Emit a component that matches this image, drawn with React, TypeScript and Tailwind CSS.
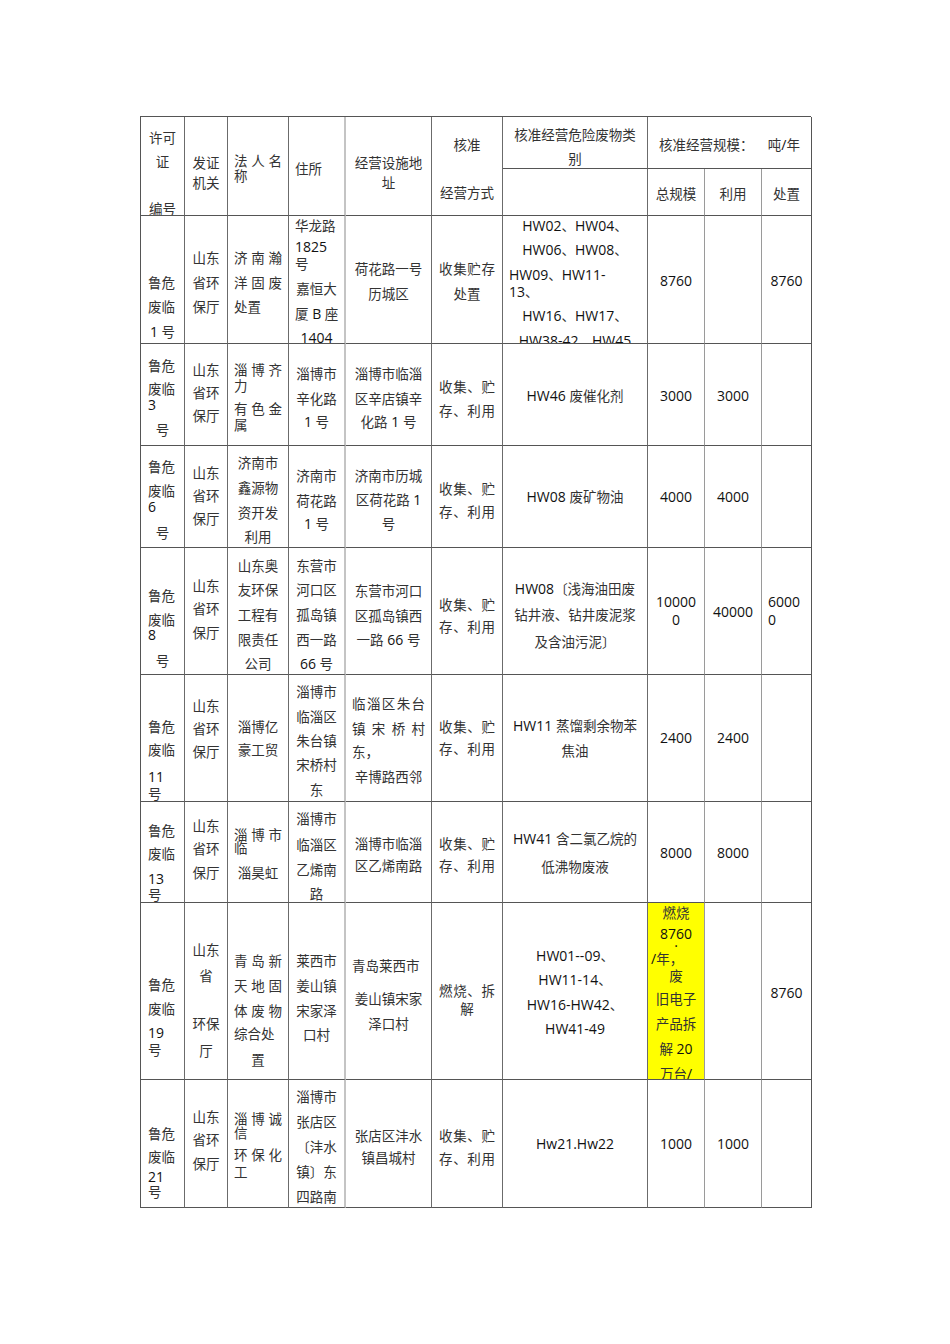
import React from "react";

type Align = "c" | "l" | "j";
type Line = [string, number, Align];
type Cell = {
  col: number;
  top: number;
  lines: Line[];
  span?: "r2" | "c3";
  yellow?: boolean;
};

const LH = 17;
const CJK = /([\u2E80-\u9FFF\u3000-\u303F\uFF00-\uFFEF]+)/;

function Runs({ text }: { text: string }) {
  const parts = text.split(CJK).filter((p) => p.length > 0);
  return (
    <>
      {parts.map((p, i) =>
        CJK.test(p) ? (
          <span key={i} className="text-[13.5px] text-[#333333]">
            {p}
          </span>
        ) : (
          <span key={i} className="text-[14px] text-[#111111]">
            {p}
          </span>
        )
      )}
    </>
  );
}

const PAD: Record<number, string> = {
  1: "px-[7px]",
  2: "px-[5px]",
  3: "px-[6px]",
  4: "px-[6px]",
  5: "px-[6px]",
  6: "px-[7px]",
  7: "px-[6px]",
  8: "px-[3px]",
  9: "px-[3px]",
  10: "px-[6px]",
};

const BORDER: Record<number, string> = {
  1: "border-r border-r-[#6b6b6b]",
  2: "border-r border-r-[#6b6b6b]",
  3: "border-r border-r-[#6b6b6b]",
  4: "border-r-2 border-r-[#c4c4c4]",
  5: "border-r border-r-[#6b6b6b]",
  6: "border-r border-r-[#6b6b6b]",
  7: "border-r border-r-[#6b6b6b]",
  8: "border-r border-r-[#9a9a9a]",
  9: "border-r border-r-[#9a9a9a]",
  10: "border-r border-r-[#555555]",
};

function LineView({ line, mt }: { line: Line; mt: number }) {
  const [text, , align] = line;
  if (align === "j") {
    const segs = text.includes("|")
      ? text.split("|")
      : Array.from(text.replace(/\s/g, ""));
    return (
      <div
        className="flex h-[17px] shrink-0 justify-between whitespace-nowrap leading-[17px]"
        style={{ marginTop: mt }}
      >
        {segs.map((s, i) => (
          <span key={i}>
            <Runs text={s} />
          </span>
        ))}
      </div>
    );
  }
  return (
    <div
      className={
        "h-[17px] shrink-0 whitespace-nowrap leading-[17px] " +
        (align === "c" ? "text-center" : "text-left")
      }
      style={{ marginTop: mt }}
    >
      <Runs text={text} />
    </div>
  );
}

function CellView({ cell }: { cell: Cell }) {
  const spanCls =
    cell.span === "r2" ? "row-span-2" : cell.span === "c3" ? "col-span-3" : "";
  const pad = cell.span === "c3" ? "px-[11px]" : PAD[cell.col];
  const border =
    cell.span === "c3" ? "border-r border-r-[#555555]" : BORDER[cell.col];
  let prev = cell.top - LH / 2 - LH;
  return (
    <div
      className={
        "flex flex-col overflow-hidden border-b border-b-[#555555] " +
        spanCls +
        " " +
        pad +
        " " +
        border +
        (cell.yellow ? " bg-[#ffff00]" : "")
      }
    >
      {cell.lines.map((ln, i) => {
        const mt = ln[1] - prev - LH;
        prev = ln[1];
        return (
          <LineView
            key={i}
            line={ln}
            mt={i === 0 ? ln[1] - LH / 2 - cell.top : mt}
          />
        );
      })}
    </div>
  );
}

const H1 = 117;
const H2 = 169;

const header: Cell[] = [
  { col: 1, top: H1, span: "r2", lines: [["许可", 137.7, "c"], ["证", 162, "c"], ["编号", 208.7, "c"]] },
  { col: 2, top: H1, span: "r2", lines: [["发证", 162, "c"], ["机关", 182.7, "c"]] },
  { col: 3, top: H1, span: "r2", lines: [["法人名", 160.3, "j"], ["称", 175.3, "l"]] },
  { col: 4, top: H1, span: "r2", lines: [["住所", 168, "l"]] },
  { col: 5, top: H1, span: "r2", lines: [["经营设施地", 162, "c"], ["址", 182.7, "c"]] },
  { col: 6, top: H1, span: "r2", lines: [["核准", 144.3, "c"], ["经营方式", 193, "c"]] },
  { col: 7, top: H1, lines: [["核准经营危险废物类", 134.7, "c"], ["别", 158.5, "c"]] },
  { col: 8, top: H1, span: "c3", lines: [["核准经营规模：|吨/年", 144.3, "j"]] },
  { col: 7, top: H2, lines: [] },
  { col: 8, top: H2, lines: [["总规模", 193, "c"]] },
  { col: 9, top: H2, lines: [["利用", 193, "c"]] },
  { col: 10, top: H2, lines: [["处置", 193, "c"]] },
];

const row = (top: number, cols: Line[][], yellowCol?: number): Cell[] =>
  cols.map((lines, i) => ({
    col: i + 1,
    top,
    lines,
    yellow: yellowCol === i + 1,
  }));

const body: Cell[] = [
  ...row(216, [
    [["鲁危", 282, "l"], ["废临", 306, "l"], ["1 号", 331, "c"]],
    [["山东", 257, "c"], ["省环", 282, "c"], ["保厅", 306, "c"]],
    [["济南瀚", 257, "j"], ["洋固废", 282, "j"], ["处置", 306, "l"]],
    [["华龙路", 225.3, "l"], ["1825", 247, "l"], ["号", 263.7, "l"], ["嘉恒大", 288.7, "c"], ["厦 B 座", 313.7, "c"], ["1404", 338, "c"]],
    [["荷花路一号", 268.7, "c"], ["历城区", 293.7, "c"]],
    [["收集贮存", 268.7, "j"], ["处置", 293.7, "c"]],
    [["HW02、HW04、", 225.3, "c"], ["HW06、HW08、", 249.3, "c"], ["HW09、HW11-", 274.3, "l"], ["13、", 292, "l"], ["HW16、HW17、", 315.3, "c"], ["HW38-42、HW45", 340.3, "c"]],
    [["8760", 280.3, "c"]],
    [],
    [["8760", 280.3, "c"]],
  ]),
  ...row(344, [
    [["鲁危", 365, "l"], ["废临", 388.3, "l"], ["3", 404, "l"], ["号", 429.3, "c"]],
    [["山东", 369.3, "c"], ["省环", 392.7, "c"], ["保厅", 416, "c"]],
    [["淄博齐", 369.3, "j"], ["力", 385, "l"], ["有色金", 408.3, "j"], ["属", 424, "l"]],
    [["淄博市", 373.3, "c"], ["辛化路", 398.3, "c"], ["1 号", 421.7, "c"]],
    [["淄博市临淄", 373.3, "c"], ["区辛店镇辛", 398.3, "c"], ["化路 1 号", 421.7, "c"]],
    [["收集、贮", 386, "j"], ["存、利用", 410, "j"]],
    [["HW46 废催化剂", 395, "c"]],
    [["3000", 395, "c"]],
    [["3000", 395, "c"]],
    [],
  ]),
  ...row(446, [
    [["鲁危", 466.7, "l"], ["废临", 490.7, "l"], ["6", 506.7, "l"], ["号", 532.7, "c"]],
    [["山东", 472.7, "c"], ["省环", 495.3, "c"], ["保厅", 519, "c"]],
    [["济南市", 462.7, "c"], ["鑫源物", 487.3, "c"], ["资开发", 512.7, "c"], ["利用", 536.7, "c"]],
    [["济南市", 475, "c"], ["荷花路", 500, "c"], ["1 号", 523.3, "c"]],
    [["济南市历城", 475, "c"], ["区荷花路 1", 499.3, "c"], ["号", 523.3, "c"]],
    [["收集、贮", 488.3, "j"], ["存、利用", 511.7, "j"]],
    [["HW08 废矿物油", 496.7, "c"]],
    [["4000", 496.7, "c"]],
    [["4000", 496.7, "c"]],
    [],
  ]),
  ...row(548, [
    [["鲁危", 595, "l"], ["废临", 619, "l"], ["8", 634.3, "l"], ["号", 660, "c"]],
    [["山东", 585, "c"], ["省环", 608.3, "c"], ["保厅", 632.3, "c"]],
    [["山东奥", 565.7, "c"], ["友环保", 590, "c"], ["工程有", 615, "c"], ["限责任", 639.3, "c"], ["公司", 663.3, "c"]],
    [["东营市", 565.7, "c"], ["河口区", 590, "c"], ["孤岛镇", 615, "c"], ["西一路", 639.3, "c"], ["66 号", 663.3, "c"]],
    [["东营市河口", 590, "c"], ["区孤岛镇西", 615, "c"], ["一路 66 号", 639.3, "c"]],
    [["收集、贮", 604.3, "j"], ["存、利用", 626.7, "j"]],
    [["HW08〔浅海油田废", 588.3, "c"], ["钻井液、钻井废泥浆", 615, "c"], ["及含油污泥〕", 641.7, "c"]],
    [["10000", 601.7, "c"], ["0", 620, "c"]],
    [["40000", 611.7, "c"]],
    [["6000", 601.7, "l"], ["0", 620, "l"]],
  ]),
  ...row(675, [
    [["鲁危", 726.7, "l"], ["废临", 750, "l"], ["11", 776.7, "l"], ["号", 793.3, "l"]],
    [["山东", 705, "c"], ["省环", 728.3, "c"], ["保厅", 751.7, "c"]],
    [["淄博亿", 726.7, "c"], ["豪工贸", 750, "c"]],
    [["淄博市", 691.7, "c"], ["临淄区", 716.7, "c"], ["朱台镇", 741, "c"], ["宋桥村", 765, "c"], ["东", 790, "c"]],
    [["临淄区朱台", 703.3, "j"], ["镇宋桥村", 728.3, "j"], ["东，", 751.7, "l"], ["辛博路西邻", 776.7, "c"]],
    [["收集、贮", 726.7, "j"], ["存、利用", 749, "j"]],
    [["HW11 蒸馏剩余物苯", 725, "c"], ["焦油", 750, "c"]],
    [["2400", 737.7, "c"]],
    [["2400", 737.7, "c"]],
    [],
  ]),
  ...row(802, [
    [["鲁危", 830, "l"], ["废临", 853.3, "l"], ["13", 878.3, "l"], ["号", 894.3, "l"]],
    [["山东", 825.7, "c"], ["省环", 849, "c"], ["保厅", 872.3, "c"]],
    [["淄博市", 834.3, "j"], ["临", 847.7, "l"], ["淄昊虹", 872.3, "c"]],
    [["淄博市", 818.3, "c"], ["临淄区", 845, "c"], ["乙烯南", 870, "c"], ["路", 893.3, "c"]],
    [["淄博市临淄", 843.3, "c"], ["区乙烯南路", 865.7, "c"]],
    [["收集、贮", 843.3, "j"], ["存、利用", 865.7, "j"]],
    [["HW41 含二氯乙烷的", 838.3, "c"], ["低沸物废液", 866.7, "c"]],
    [["8000", 852.3, "c"]],
    [["8000", 852.3, "c"]],
    [],
  ]),
  ...row(
    903,
    [
      [["鲁危", 984.3, "l"], ["废临", 1008.3, "l"], ["19", 1032.3, "l"], ["号", 1050, "l"]],
      [["山东", 949, "c"], ["省", 975, "c"], ["环保", 1023.3, "c"], ["厅", 1051, "c"]],
      [["青岛新", 960, "j"], ["天地固", 985, "j"], ["体废物", 1010, "j"], ["综合处", 1033.3, "l"], ["置", 1060, "c"]],
      [["莱西市", 960, "c"], ["姜山镇", 985.7, "c"], ["宋家泽", 1010.7, "c"], ["口村", 1035, "c"]],
      [["青岛莱西市", 965.7, "l"], ["姜山镇宋家", 999, "c"], ["泽口村", 1023.3, "c"]],
      [["燃烧、拆", 990, "j"], ["解", 1008.3, "c"]],
      [["HW01--09、", 955, "c"], ["HW11-14、", 979, "c"], ["HW16-HW42、", 1004, "c"], ["HW41-49", 1028.3, "c"]],
      [["燃烧", 912.3, "c"], ["8760", 933.3, "c"], ["·", 945, "c"], ["/年，", 958.3, "l"], ["废", 975, "c"], ["旧电子", 998.3, "c"], ["产品拆", 1023.3, "c"], ["解 20", 1048.3, "c"], ["万台/", 1073.3, "c"]],
      [],
      [["8760", 992.3, "c"]],
    ],
    8
  ),
  ...row(1080, [
    [["鲁危", 1133.3, "l"], ["废临", 1156.7, "l"], ["21", 1176.7, "l"], ["号", 1191.7, "l"]],
    [["山东", 1116.7, "c"], ["省环", 1140, "c"], ["保厅", 1163.3, "c"]],
    [["淄博诚", 1118.3, "j"], ["信", 1132.3, "l"], ["环保化", 1155, "j"], ["工", 1171.7, "l"]],
    [["淄博市", 1096.7, "c"], ["张店区", 1121.7, "c"], ["〔沣水", 1146.7, "c"], ["镇〕东", 1171.7, "c"], ["四路南", 1196.7, "c"]],
    [["张店区沣水", 1135.7, "c"], ["镇昌城村", 1157.7, "c"]],
    [["收集、贮", 1135, "j"], ["存、利用", 1158.3, "j"]],
    [["Hw21.Hw22", 1143.3, "c"]],
    [["1000", 1143.3, "c"]],
    [["1000", 1143.3, "c"]],
    [],
  ]),
];

export default function App() {
  return (
    <div className="min-h-[1344px] w-[950px] bg-white pl-[140px] pt-[116px] font-['Open_Sans','Noto_Sans_CJK_SC',sans-serif]">
      <div className="grid w-[671px] grid-cols-[44px_43px_61px_57px_86px_71px_145px_57px_57px_50px] grid-rows-[52px_47px_128px_102px_102px_127px_127px_101px_177px_128px] border-l border-t border-l-[#555555] border-t-[#555555]">
        {[...header, ...body].map((c, i) => (
          <CellView key={i} cell={c} />
        ))}
      </div>
    </div>
  );
}
